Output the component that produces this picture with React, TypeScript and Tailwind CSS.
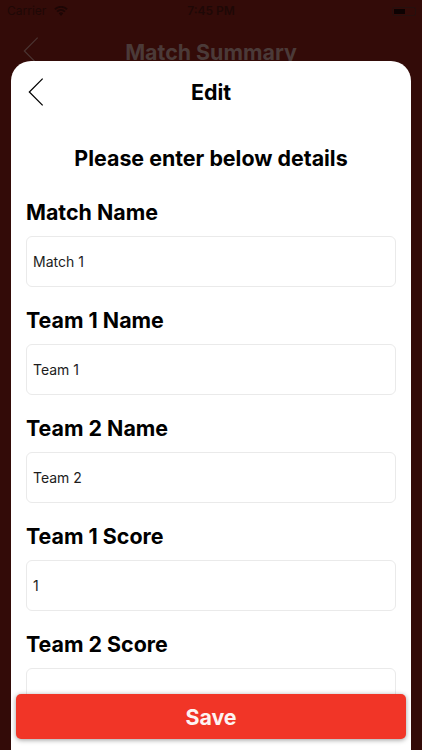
const fields = [
  { label: 'Match Name', value: 'Match 1' },
  { label: 'Team 1 Name', value: 'Team 1' },
  { label: 'Team 2 Name', value: 'Team 2' },
  { label: 'Team 1 Score', value: '1' },
  { label: 'Team 2 Score', value: '' },
]

function Chevron({ className }: { className: string }) {
  return (
    <svg className={className} viewBox="0 0 18 32" fill="none" stroke="currentColor" strokeWidth="1.4">
      <path d="M16.5 1 L1.5 16 L16.5 31" />
    </svg>
  )
}

export default function App() {
  return (
    <div className="relative h-[750px] w-[422px] overflow-hidden bg-[#330b08] font-['Inter','Noto_Sans',sans-serif]">
      {/* status bar */}
      <div className="flex h-[22px] items-center justify-between pl-[7px] pr-[6px] text-[#1d0605]">
        <div className="flex items-center gap-[8px]">
          <span className="text-[12px] text-[#1e0806]">Carrier</span>
          <svg className="h-[10px] w-[14px]" viewBox="0 0 14 10" fill="currentColor">
            <path d="M7 10 L4.7 7.3 A3.4 3.4 0 0 1 9.3 7.3 Z M3.7 6.2 L2.5 4.9 A6.4 6.4 0 0 1 11.5 4.9 L10.3 6.2 A4.8 4.8 0 0 0 3.7 6.2 Z M1.6 3.9 L0.3 2.6 A9.6 9.6 0 0 1 13.7 2.6 L12.4 3.9 A7.8 7.8 0 0 0 1.6 3.9 Z" />
          </svg>
        </div>
        <span className="absolute left-0 right-0 text-center text-[12px] font-semibold text-[#1e0806]">7:45 PM</span>
        <div className="flex h-[9px] w-[24px] items-center rounded-[2px] border border-[#26100e] p-[1px]">
          <div className="h-full w-[11px] bg-[#0d0202]" />
        </div>
      </div>

      {/* dimmed screen behind the sheet */}
      <div className="relative flex h-[39px] items-start justify-center pt-[17px]">
        <Chevron className="absolute left-[23px] top-[14px] h-[30px] w-[16px] text-[#4a3331]" />
        <span className="text-[21.4px] font-bold leading-[26px] text-[#4b3a38]">Match Summary</span>
      </div>

      {/* sheet */}
      <div className="relative mx-[11px] h-[700px] rounded-t-[20px] bg-white">
        <div className="relative flex h-[62px] items-center justify-center pt-[1px]">
          <Chevron className="absolute left-[17px] top-[16px] h-[30px] w-[16px] text-black" />
          <span className="text-[21.4px] font-bold text-black">Edit</span>
        </div>
        <p className="mt-[22px] text-center text-[21.4px] font-bold leading-[26px] text-black">
          Please enter below details
        </p>
        <div className="mt-[28px] flex flex-col gap-[20px] px-[15px]">
          {fields.map(field => (
            <div key={field.label}>
              <div className="text-[21.4px] font-bold leading-[26px] text-black">{field.label}</div>
              <div className="mt-[11px] flex h-[51px] items-center rounded-[6px] border border-[#eaeaea] px-[6px] pb-[1px] text-[14px] text-[#1c1c1c]">
                {field.value}
              </div>
            </div>
          ))}
        </div>
      </div>

      {/* save button */}
      <div className="absolute bottom-[11px] left-[16px] right-[16px] flex h-[45px] items-center justify-center rounded-[5px] bg-[#f13527] pt-[1px] text-[21.4px] font-bold text-[#fdf3f2] shadow-[0_1px_5px_rgba(0,0,0,0.4)]">
        Save
      </div>
    </div>
  )
}
